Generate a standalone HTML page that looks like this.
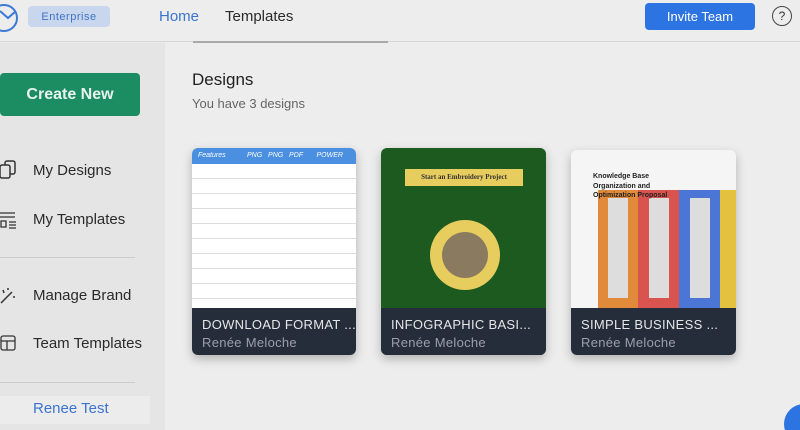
<!DOCTYPE html>
<html><head><meta charset="utf-8"><style>
*{margin:0;padding:0;box-sizing:border-box}
html,body{width:800px;height:430px;overflow:hidden}
body{background:#ededed;font-family:"Liberation Sans",sans-serif;position:relative}
.a{position:absolute}
.hdr{left:0;top:0;width:800px;height:42px;background:#ededed;border-bottom:1px solid #d6d6d6}
.side{left:0;top:43px;width:165px;height:387px;background:#e5e5e5}
.nav{font-size:15px;color:#2a2a2a;white-space:nowrap}
.card{border-radius:6px;overflow:hidden;box-shadow:0 4px 10px rgba(0,0,0,.25)}
.band{position:absolute;left:0;right:0;bottom:0;height:47px;background:#262d3a;padding:9px 10px;color:#e5e6e8;font-size:13px;letter-spacing:.3px;white-space:nowrap}
.band div:last-child{color:#9aa0aa;margin-top:3px}
</style></head><body>
<div class="a hdr"></div>
<div class="a" style="left:-10px;top:4px;width:28px;height:28px;border:2px solid #3b7ad6;border-radius:50%"></div>
<svg class="a" style="left:0;top:10px" width="16" height="10"><path d="M0 1 L8 8 L16 1" stroke="#3b7ad6" stroke-width="2" fill="none"/></svg>
<div class="a" style="left:28px;top:6px;width:82px;height:21px;background:#c9d7ee;border-radius:4px;color:#3d73c4;font-size:11px;display:flex;align-items:center;justify-content:center;letter-spacing:.5px">Enterprise</div>
<div class="a nav" style="left:159px;top:8px;color:#3b74d0">Home</div>
<div class="a nav" style="left:225px;top:8px">Templates</div>
<div class="a" style="left:193px;top:41px;width:195px;height:2px;background:#a9a9a9"></div>
<div class="a" style="left:645px;top:3px;width:110px;height:27px;background:#2b74e2;border-radius:4px;color:#fff;font-size:13px;line-height:27px;text-align:center">Invite Team</div>
<div class="a" style="left:772px;top:6px;width:20px;height:20px;border:1px solid #444;border-radius:50%;font-size:12px;text-align:center;line-height:18px;color:#333">?</div>
<div class="a side"></div>
<div class="a" style="left:0;top:73px;width:140px;height:43px;background:#1c8d63;border-radius:4px;font-size:16px;font-weight:bold;line-height:43px;text-align:center;color:#e8f3ee">Create New</div>
<svg class="a" style="left:0;top:160px" width="18" height="22"><rect x="5" y="1" width="10" height="13" rx="2" fill="none" stroke="#333" stroke-width="1.5"/><rect x="0" y="5" width="10" height="13" rx="2" fill="#e5e5e5" stroke="#333" stroke-width="1.5"/></svg>
<div class="a nav" style="left:33px;top:162px">My Designs</div>
<svg class="a" style="left:0;top:212px" width="18" height="18"><path d="M0 1H15M0 5H15M1 9H6V15H1ZM9 10H16M9 13H16M9 16H16" stroke="#333" stroke-width="1.3" fill="none"/></svg>
<div class="a nav" style="left:33px;top:211px">My Templates</div>
<div class="a" style="left:0;top:257px;width:135px;height:1px;background:#ccc"></div>
<svg class="a" style="left:0;top:287px" width="18" height="18"><path d="M1 16L12 5M3 3L4 6M8 1L8 3M13 10L15 10" stroke="#333" stroke-width="1.5" fill="none"/></svg>
<div class="a nav" style="left:33px;top:287px">Manage Brand</div>
<svg class="a" style="left:0;top:335px" width="18" height="18"><rect x="1" y="1" width="14" height="14" rx="2" fill="none" stroke="#333" stroke-width="1.3"/><path d="M1 6H15M7 6V15" stroke="#333" stroke-width="1.3"/></svg>
<div class="a nav" style="left:33px;top:335px">Team Templates</div>
<div class="a" style="left:0;top:382px;width:135px;height:1px;background:#ccc"></div>
<div class="a" style="left:0;top:396px;width:150px;height:28px;background:#ececec"></div>
<div class="a nav" style="left:33px;top:400px;color:#3b74d0">Renee Test</div>
<div class="a" style="left:192px;top:70px;font-size:17px;color:#222">Designs</div>
<div class="a" style="left:192px;top:96px;font-size:13px;color:#666">You have 3 designs</div>

<div class="a card" style="left:192px;top:148px;width:164px;height:207px;background:#fff">
<div style="height:16px;background:#4a8fe0;color:#fff;font-size:7px;padding:4px 6px;font-style:italic;white-space:nowrap">Features &nbsp; &nbsp; &nbsp; &nbsp; &nbsp; PNG &nbsp; PNG &nbsp; PDF &nbsp; &nbsp; &nbsp; POWER</div>
<div style="height:145px;background:repeating-linear-gradient(#fff 0 14px,#ddd 14px 15px)"></div>
<div class="band"><div>DOWNLOAD FORMAT ...</div><div>Renée Meloche</div></div></div>

<div class="a card" style="left:381px;top:148px;width:165px;height:207px;background:#1d5a20">
<div class="a" style="left:24px;top:21px;width:118px;height:17px;background:#e7cd5d;font-size:7px;font-family:'Liberation Serif',serif;font-weight:bold;text-align:center;line-height:17px;color:#333;white-space:nowrap">Start an Embroidery Project</div>
<div class="a" style="left:49px;top:72px;width:70px;height:70px;border-radius:50%;background:#e7cd5d"></div>
<div class="a" style="left:61px;top:84px;width:46px;height:46px;border-radius:50%;background:#8a7a60"></div>
<div class="band"><div>INFOGRAPHIC BASI...</div><div>Renée Meloche</div></div></div>

<div class="a card" style="left:571px;top:150px;width:165px;height:205px;background:#f5f5f5">
<div class="a" style="left:22px;top:22px;font-size:7px;font-weight:bold;color:#222;line-height:9.5px;width:120px;z-index:2">Knowledge Base<br>Organization and<br>Optimization Proposal</div>
<div class="a" style="left:27px;top:40px;width:40px;height:120px;background:#e08a3a"></div>
<div class="a" style="left:67px;top:40px;width:41px;height:120px;background:#d9534f"></div>
<div class="a" style="left:108px;top:40px;width:41px;height:120px;background:#4c76d6"></div>
<div class="a" style="left:149px;top:40px;width:16px;height:120px;background:#e5c140"></div>
<div class="a" style="left:37px;top:48px;width:20px;height:100px;background:#ddd"></div>
<div class="a" style="left:78px;top:48px;width:20px;height:100px;background:#ddd"></div>
<div class="a" style="left:119px;top:48px;width:20px;height:100px;background:#ddd"></div>
<div class="band"><div>SIMPLE BUSINESS ...</div><div>Renée Meloche</div></div></div>

<div class="a" style="left:784px;top:404px;width:40px;height:40px;border-radius:50%;background:#2b74e2"></div>
</body></html>
